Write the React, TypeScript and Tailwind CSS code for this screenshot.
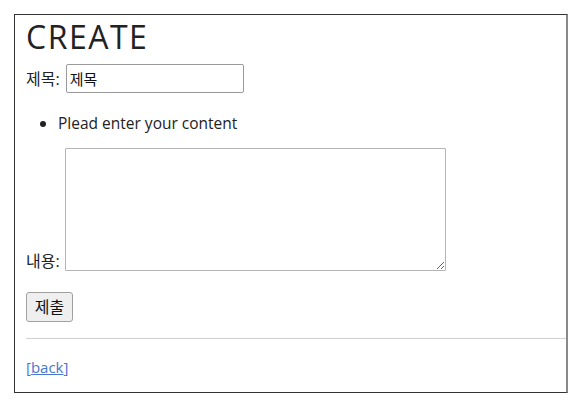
import React from "react";

export default function App() {
  const font = { fontFamily: "'Open Sans', 'Noto Sans CJK KR', sans-serif" };
  return (
    <div className="bg-white w-[584px] h-[410px] pt-[14px] pl-[14px]" style={font}>
      <div className="w-[554px] h-[379px] border-t border-l border-b border-t-[#333] border-l-[#333] border-b-[#333] border-r-2 border-r-[#8a8a8a] pl-[11px] overflow-hidden text-[#222]">
        <h1 className="text-[32px] leading-[40px] mt-[2px] font-normal tracking-[1.5px]">CREATE</h1>
        <div className="flex items-center mt-[7px] h-[29px] text-[16px]">
          <label className="mr-[6px]">제목:</label>
          <input
            type="text"
            defaultValue="제목"
            className="w-[178px] h-[29px] border border-[#9a9a9a] rounded-[2px] pl-[3px] pr-[2px] text-[15px] text-[#111] outline-none"
          />
        </div>
        <ul className="list-disc pl-[32px] mt-[18px] text-[15.5px] leading-[24px] marker:text-[#222]">
          <li>Plead enter your content</li>
        </ul>
        <div className="flex items-end mt-[13px] text-[16px]">
          <label className="mr-[5px] leading-[20px]">내용:</label>
          <textarea className="w-[381px] h-[123px] border border-[#b5b5b5] rounded-[1px] outline-none" />
        </div>
        <button className="mt-[21px] w-[47px] h-[30px] bg-[#efefef] border border-[#a0a0a0] rounded-[3px] text-[16px] text-[#111] block">
          제출
        </button>
        <hr className="mt-[16px] border-t border-[#d0d0d0]" />
        <div className="mt-[16px] text-[15px] leading-[24px] text-[#4677d2]">
          <span>[</span>
          <a href="#" className="underline">back</a>
          <span>]</span>
        </div>
      </div>
    </div>
  );
}
